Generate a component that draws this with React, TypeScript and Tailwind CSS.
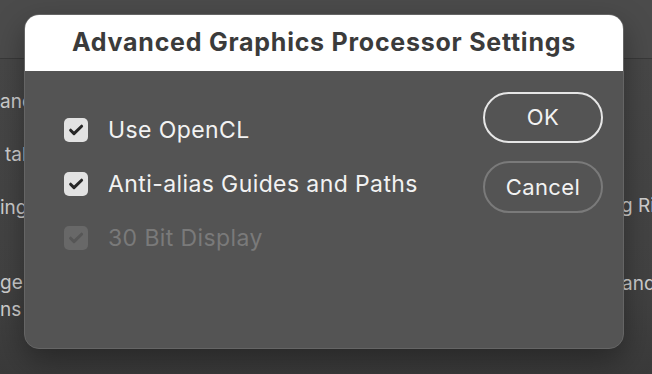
import React from "react";

const font = { fontFamily: "Inter, 'Noto Sans', 'Liberation Sans', sans-serif" };

function Check({ disabled }: { disabled?: boolean }) {
  return (
    <div
      className={`w-[24px] h-[24px] rounded-[5px] flex items-center justify-center shrink-0 ${
        disabled ? "bg-[#686868]" : "bg-[#e2e2e2]"
      }`}
    >
      <svg width="24" height="24" viewBox="0 0 24 24">
        <path
          d="M6.6 12.2 L10 15.6 L17.6 8.2"
          fill="none"
          stroke={disabled ? "#565656" : "#272727"}
          strokeWidth="3"
          strokeLinecap="round"
          strokeLinejoin="round"
        />
      </svg>
    </div>
  );
}

function Row({ label, checked, disabled }: { label: string; checked?: boolean; disabled?: boolean }) {
  return (
    <div className="flex items-center gap-[20px] h-[24px]">
      {checked && <Check disabled={disabled} />}
      <span
        className={`text-[23px] leading-none tracking-[0.4px] ${disabled ? "text-[#7a7a7a]" : "text-[#f2f2f2]"}`}
      >
        {label}
      </span>
    </div>
  );
}

export default function App() {
  return (
    <div className="relative w-[652px] h-[374px] overflow-hidden bg-[#3c3c3c] text-[#cfcfcf]" style={font}>
      {/* window behind */}
      <div className="h-[59px] bg-[#4b4b4b] border-b border-[#393939]" />
      <div className="flex justify-between h-[315px] bg-[linear-gradient(180deg,#474747_0%,#424242_70%,#3a3a3a_100%)]">
        <div className="w-[40px] overflow-hidden flex flex-col items-start text-[19px] leading-none whitespace-nowrap pt-[33px]">
          <div className="h-[20px]">ance</div>
          <div className="h-[20px] mt-[33px] ml-[5px]">tab</div>
          <div className="h-[20px] mt-[33px]">ings</div>
          <div className="h-[20px] mt-[55px]">ge s</div>
          <div className="h-[20px] mt-[7px]">ns</div>
        </div>
        <div className="w-[28px] overflow-hidden flex flex-col items-start text-[19px] leading-none whitespace-nowrap pt-[137px]">
          <div className="h-[20px] -ml-[3px]">g Ri</div>
          <div className="h-[20px] mt-[58px] -ml-[2px]">and</div>
        </div>
      </div>

      {/* dialog */}
      <div className="absolute left-[24px] top-[14px] w-[600px] h-[335px] rounded-[15px] overflow-hidden bg-[#545454] border border-[#656565] shadow-[0_12px_30px_rgba(0,0,0,0.35)] flex flex-col">
        <div className="h-[56px] bg-white flex items-center justify-center shrink-0">
          <span className="text-[25px] font-bold text-[#3b3b3b] tracking-[0.75px]">Advanced Graphics Processor Settings</span>
        </div>
        <div className="flex justify-between pl-[39px] pr-[20px] pt-[21px]">
          <div className="flex flex-col gap-[30px] pt-[26px]">
            <Row label="Use OpenCL" checked />
            <Row label="Anti-alias Guides and Paths" checked />
            <Row label="30 Bit Display" checked disabled />
          </div>
          <div className="flex flex-col gap-[18px]">
            <button className="w-[120px] h-[51px] rounded-full border-2 border-[#e6e6e6] text-[22px] tracking-[0.4px] text-[#f2f2f2] flex items-center justify-center">
              OK
            </button>
            <button className="w-[120px] h-[52px] rounded-full border-2 border-[#7a7a7a] text-[22px] tracking-[0.4px] text-[#f2f2f2] flex items-center justify-center">
              Cancel
            </button>
          </div>
        </div>
      </div>
    </div>
  );
}
